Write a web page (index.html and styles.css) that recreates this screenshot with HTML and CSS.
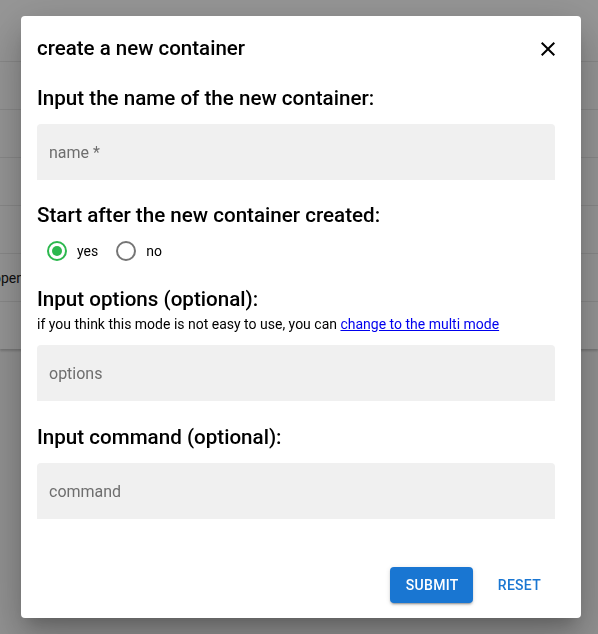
FILE: index.html
```html
<!DOCTYPE html>
<html>
<head>
<meta charset="utf-8">
<link rel="stylesheet" href="styles.css">
</head>
<body>
<div class="page">
  <div class="table">
    <div class="row head"></div>
    <div class="row"></div>
    <div class="row"></div>
    <div class="row"></div>
    <div class="row"></div>
    <div class="row"><span class="cell">openjdk</span></div>
    <div class="row last"></div>
  </div>
</div>
<div class="dialog">
  <div class="title-row">
    <h2 class="title">create a new container</h2>
    <svg class="close" viewBox="0 0 24 24" width="24" height="24"><path d="M19 6.41 17.59 5 12 10.59 6.41 5 5 6.41 10.59 12 5 17.59 6.41 19 12 13.41 17.59 19 19 17.59 13.41 12z" fill="#000"/></svg>
  </div>
  <div class="content">
    <h3 class="heading h-name">Input the name of the new container:</h3>
    <div class="field f-name"><span class="ph">name *</span></div>
    <h3 class="heading h-start">Start after the new container created:</h3>
    <div class="radios">
      <label class="radio"><span class="circle on"><span class="dot"></span></span><span class="rlabel">yes</span></label>
      <label class="radio"><span class="circle"></span><span class="rlabel">no</span></label>
    </div>
    <h3 class="heading h-opt">Input options (optional):</h3>
    <p class="hint">if you think this mode is not easy to use, you can <a href="#" class="link">change to the multi mode</a></p>
    <div class="field f-opt"><span class="ph">options</span></div>
    <h3 class="heading h-cmd">Input command (optional):</h3>
    <div class="field f-cmd"><span class="ph">command</span></div>
  </div>
  <div class="actions">
    <button class="btn submit">Submit</button>
    <button class="btn reset">Reset</button>
  </div>
</div>
</body>
</html>
```

FILE: styles.css
```css
html, body {
  margin: 0;
  padding: 0;
}
body {
  background: #939393;
  font-family: Roboto, "Liberation Sans", sans-serif;
  width: 598px;
  height: 634px;
  overflow: hidden;
}
.table {
  background: #979797;
  box-shadow: 0 2px 2px rgba(0,0,0,0.18);
}
.row {
  height: 47px;
  border-bottom: 1px solid #8a8a8a;
  display: flex;
  align-items: center;
}
.row.head {
  height: 61px;
}
.row.last {
  border-bottom: none;
  height: 47px;
}
.cell {
  font-size: 14px;
  color: #0f0f0f;
  margin-left: -7px;
  margin-top: 1px;
}
.dialog {
  position: fixed;
  left: 21px;
  top: 16px;
  width: 560px;
  height: 602px;
  box-sizing: border-box;
  background: #fff;
  border-radius: 4px;
  box-shadow: 0 11px 15px -7px rgba(0,0,0,0.2), 0 24px 38px 3px rgba(0,0,0,0.14), 0 9px 46px 8px rgba(0,0,0,0.12);
  display: flex;
  flex-direction: column;
  padding: 16px 16px 15px 16px;
}
.title-row {
  display: flex;
  align-items: center;
  justify-content: space-between;
  height: 32px;
}
.title {
  margin: 0;
  font-size: 20.5px;
  font-weight: 500;
  line-height: 32px;
  color: #000;
}
.close {
  margin-right: 5px;
  margin-top: 1px;
}
.content {
  display: flex;
  flex-direction: column;
  margin-right: 10px;
}
.heading {
  margin: 0;
  font-size: 20.6px;
  font-weight: 500;
  line-height: 24px;
  color: #000;
}
.h-name { margin-top: 22px; }
.h-start { margin-top: 23px; }
.h-opt { margin-top: 15px; }
.h-cmd { margin-top: 24px; }
.field {
  height: 56px;
  background: #f0f0f0;
  border-radius: 4px 4px 0 0;
  display: flex;
  align-items: center;
  padding-left: 12px;
}
.f-name { margin-top: 14px; }
.f-opt { margin-top: 13px; }
.f-cmd { margin-top: 14px; }
.ph {
  font-size: 16px;
  color: #6e6e6e;
}
.radios {
  display: flex;
  align-items: center;
  height: 42px;
  margin-top: 3px;
}
.radio {
  display: flex;
  align-items: center;
  margin-right: 8px;
}
.circle {
  width: 16px;
  height: 16px;
  border: 2px solid #757575;
  border-radius: 50%;
  margin: 0 10px 0 10px;
  display: flex;
  align-items: center;
  justify-content: center;
  box-sizing: content-box;
}
.circle.on {
  border-color: #2cb84e;
}
.dot {
  width: 10px;
  height: 10px;
  border-radius: 50%;
  background: #2cb84e;
}
.rlabel {
  font-size: 14px;
  color: #000;
}
.hint {
  margin: 5px 0 0 0;
  font-size: 14px;
  line-height: 16px;
  color: #000;
}
.link {
  color: #0000ee;
  text-decoration: underline;
}
.actions {
  margin-top: auto;
  display: flex;
  justify-content: flex-end;
  align-items: center;
  gap: 17px;
  padding-right: 16px;
}
.btn {
  font-family: Roboto, "Liberation Sans", sans-serif;
  font-size: 14px;
  font-weight: 500;
  text-transform: uppercase;
  letter-spacing: 0.02em;
  height: 36px;
  border: none;
  border-radius: 4px;
  padding: 0 16px;
  cursor: pointer;
}
.submit {
  background: #1976d2;
  color: #fff;
  width: 83px;
  box-shadow: 0 3px 1px -2px rgba(0,0,0,0.2), 0 2px 2px 0 rgba(0,0,0,0.14), 0 1px 5px 0 rgba(0,0,0,0.12);
}
.reset {
  background: transparent;
  color: #1976d2;
  padding: 0 8px;
}
```
